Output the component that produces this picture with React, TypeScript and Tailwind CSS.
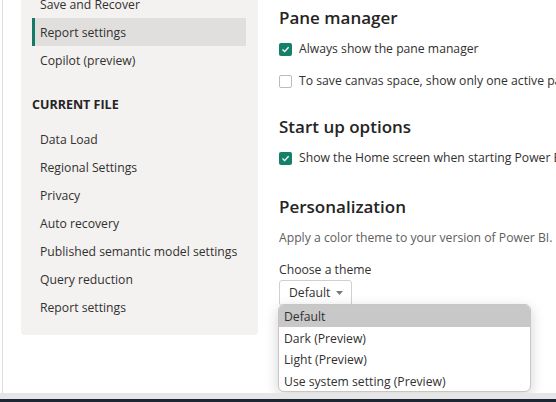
import React from "react";

const font = { fontFamily: '"Open Sans", "Noto Sans", sans-serif' };

const globalItems = ["Save and Recover", "Report settings", "Copilot (preview)"];
const fileItems = [
  "Data Load",
  "Regional Settings",
  "Privacy",
  "Auto recovery",
  "Published semantic model settings",
  "Query reduction",
  "Report settings",
];
const themes = ["Default", "Dark (Preview)", "Light (Preview)", "Use system setting (Preview)"];

function NavItem({ label, active }: { label: string; active?: boolean }) {
  return (
    <div
      className={`relative flex h-[28px] w-[214px] items-center whitespace-nowrap pl-[8px] pt-[2px] text-[12.2px] text-[#323130] ${
        active ? "bg-[#e1dfdd]" : ""
      }`}
    >
      {active && <span className="absolute left-0 top-0 h-full w-[3px] bg-[#127a65]" />}
      {label}
    </div>
  );
}

function Checkbox({ checked, label }: { checked?: boolean; label: string }) {
  return (
    <div className="flex h-[32px] items-center gap-[7px] whitespace-nowrap pt-[2px] text-[12.2px] text-[#323130]">
      {checked ? (
        <span className="flex h-[13px] w-[13px] shrink-0 items-center justify-center rounded-[2px] bg-[#14806a]">
          <svg width="9" height="9" viewBox="0 0 9 9" fill="none">
            <path d="M1.5 4.6 3.6 6.6 7.6 2.2" stroke="#fff" strokeWidth="1.4" />
          </svg>
        </span>
      ) : (
        <span className="h-[13px] w-[13px] shrink-0 rounded-[2px] border border-[#bdbbb9] bg-white" />
      )}
      <span>{label}</span>
    </div>
  );
}

function Heading({ children, className }: { children: React.ReactNode; className?: string }) {
  return (
    <h2 className={`h-[28px] text-[17px] font-semibold leading-[28px] text-[#252423] ${className ?? ""}`}>
      {children}
    </h2>
  );
}

export default function App() {
  return (
    <div className="flex h-[402px] w-[556px] flex-col overflow-hidden bg-white" style={font}>
      <div className="flex min-h-0 flex-1 pl-[2px]">
        <div className="flex min-w-0 flex-1 border-l border-[#dedede]">
          {/* options menu */}
          <div className="w-[255px] shrink-0 pl-[18px]">
            <div className="-mt-[10px] w-[237px] rounded-b-[4px] bg-[#f3f2f1] pb-[14px] pl-[11px]">
              {globalItems.map((item, i) => (
                <NavItem key={item} label={item} active={i === 1} />
              ))}
              <div className="pb-[9px] pt-[20px] text-[12.5px] font-bold leading-[22px] text-[#252423]">
                CURRENT FILE
              </div>
              {fileItems.map((item) => (
                <NavItem key={item} label={item} />
              ))}
            </div>
          </div>

          {/* settings pane */}
          <div className="min-w-0 flex-1 overflow-hidden pl-[21px] pt-[4px]">
            <Heading>Pane manager</Heading>
            <Checkbox checked label="Always show the pane manager" />
            <Checkbox label="To save canvas space, show only one active pane at a time" />

            <Heading className="mt-[17px]">Start up options</Heading>
            <Checkbox checked label="Show the Home screen when starting Power BI Desktop" />

            <Heading className="mt-[20px]">Personalization</Heading>
            <p className="mt-[7px] whitespace-nowrap text-[12.2px] leading-[20px] text-[#605e5c]">
              Apply a color theme to your version of Power BI.
            </p>
            <p className="mt-[12px] text-[12.2px] leading-[20px] text-[#323130]">Choose a theme</p>

            <div className="relative w-[73px]">
              <div className="flex h-[26px] w-[73px] items-center gap-[6px] rounded-[3px] border border-[#d2d0ce] bg-white pl-[9px] text-[12.2px] text-[#323130]">
                Default
                <svg width="7" height="4" viewBox="0 0 7 4">
                  <path d="M0 0h7L3.5 4z" fill="#7a7876" />
                </svg>
              </div>
              <div className="absolute left-[-1px] top-[24px] z-10 w-[253px] overflow-hidden rounded-[6px] border border-[#c8c6c4] bg-white shadow-[0_4px_14px_rgba(0,0,0,0.18)]">
                {themes.map((t, i) => (
                  <div
                    key={t}
                    className={`flex h-[21.5px] items-center whitespace-nowrap pl-[5px] pt-[3px] text-[12.2px] text-[#323130] ${
                      i === 0 ? "bg-[#c8c8c8]" : ""
                    }`}
                  >
                    {t}
                  </div>
                ))}
              </div>
            </div>
          </div>
        </div>
      </div>
      <div className="h-[6px] shrink-0 bg-[#e6e6e6]" />
      <div className="h-[3px] shrink-0 bg-[#1d2733]" />
    </div>
  );
}
